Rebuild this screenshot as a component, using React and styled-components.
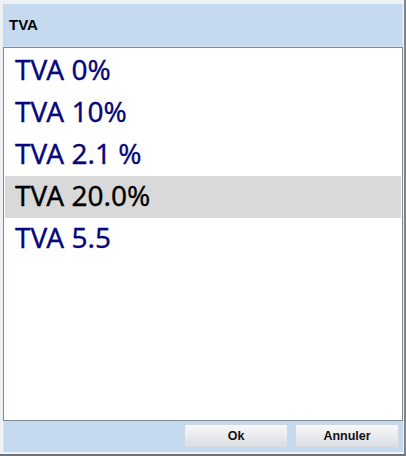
import React, { useState } from "react";
import styled, { createGlobalStyle } from "styled-components";

const GlobalStyle = createGlobalStyle`
  html, body {
    margin: 0;
    padding: 0;
    background: #ffffff;
  }
  * {
    box-sizing: border-box;
  }
`;

const Window = styled.div`
  width: 406px;
  height: 456px;
  display: flex;
  flex-direction: column;
  padding: 4px 1px 2px 3px;
  background: #eef1f5;
  border-right: 2px solid #7f8489;
  border-bottom: 2px solid #6f7479;
`;

const Header = styled.div`
  height: 43px;
  display: flex;
  align-items: center;
  padding: 0 0 2px 6px;
  background: #c5d9ef;
  border-right: 1px solid #d6e3f2;
  border-bottom: 1px solid #d6e3f2;
  font-family: "Liberation Sans", Arial, sans-serif;
  font-weight: bold;
  font-size: 15px;
  color: #000;
`;

const List = styled.div`
  flex: 1;
  display: flex;
  flex-direction: column;
  padding: 2px 1px;
  background: #ffffff;
  border: 1px solid #828890;
`;

const Row = styled.div`
  height: 42px;
  padding: 0 0 4px 10px;
  line-height: 38px;
  font-family: "Noto Sans", "Open Sans", sans-serif;
  font-size: 28px;
  white-space: nowrap;
  color: ${(p) => (p.$selected ? "#000000" : "#08087a")};
  background: ${(p) => (p.$selected ? "#d9d9d9" : "transparent")};
  -webkit-text-stroke: 0.3px currentColor;
  cursor: default;
`;

const Footer = styled.div`
  height: 31px;
  display: flex;
  justify-content: flex-end;
  align-items: center;
  gap: 7px;
  padding: 0 4px 1px 0;
  background: #c5d9ef;
  border-left: 1px solid #dbe6f3;
`;

const Button = styled.button`
  width: 104px;
  height: 24px;
  padding: 0;
  border: 1px solid #cfd8e2;
  border-radius: 2px;
  background: linear-gradient(#f7f8f9, #e9ebee 50%, #dadde1);
  font-family: "Liberation Sans", Arial, sans-serif;
  font-weight: bold;
  font-size: 12.5px;
  color: #111;
  cursor: pointer;
`;

const rates = ["TVA 0%", "TVA 10%", "TVA 2.1 %", "TVA 20.0%", "TVA 5.5"];

export default function App() {
  const [selected, setSelected] = useState(3);

  return (
    <>
      <GlobalStyle />
      <Window>
        <Header>TVA</Header>
        <List>
          {rates.map((rate, index) => (
            <Row
              key={rate}
              $selected={index === selected}
              onClick={() => setSelected(index)}
            >
              {rate}
            </Row>
          ))}
        </List>
        <Footer>
          <Button>Ok</Button>
          <Button>Annuler</Button>
        </Footer>
      </Window>
    </>
  );
}
